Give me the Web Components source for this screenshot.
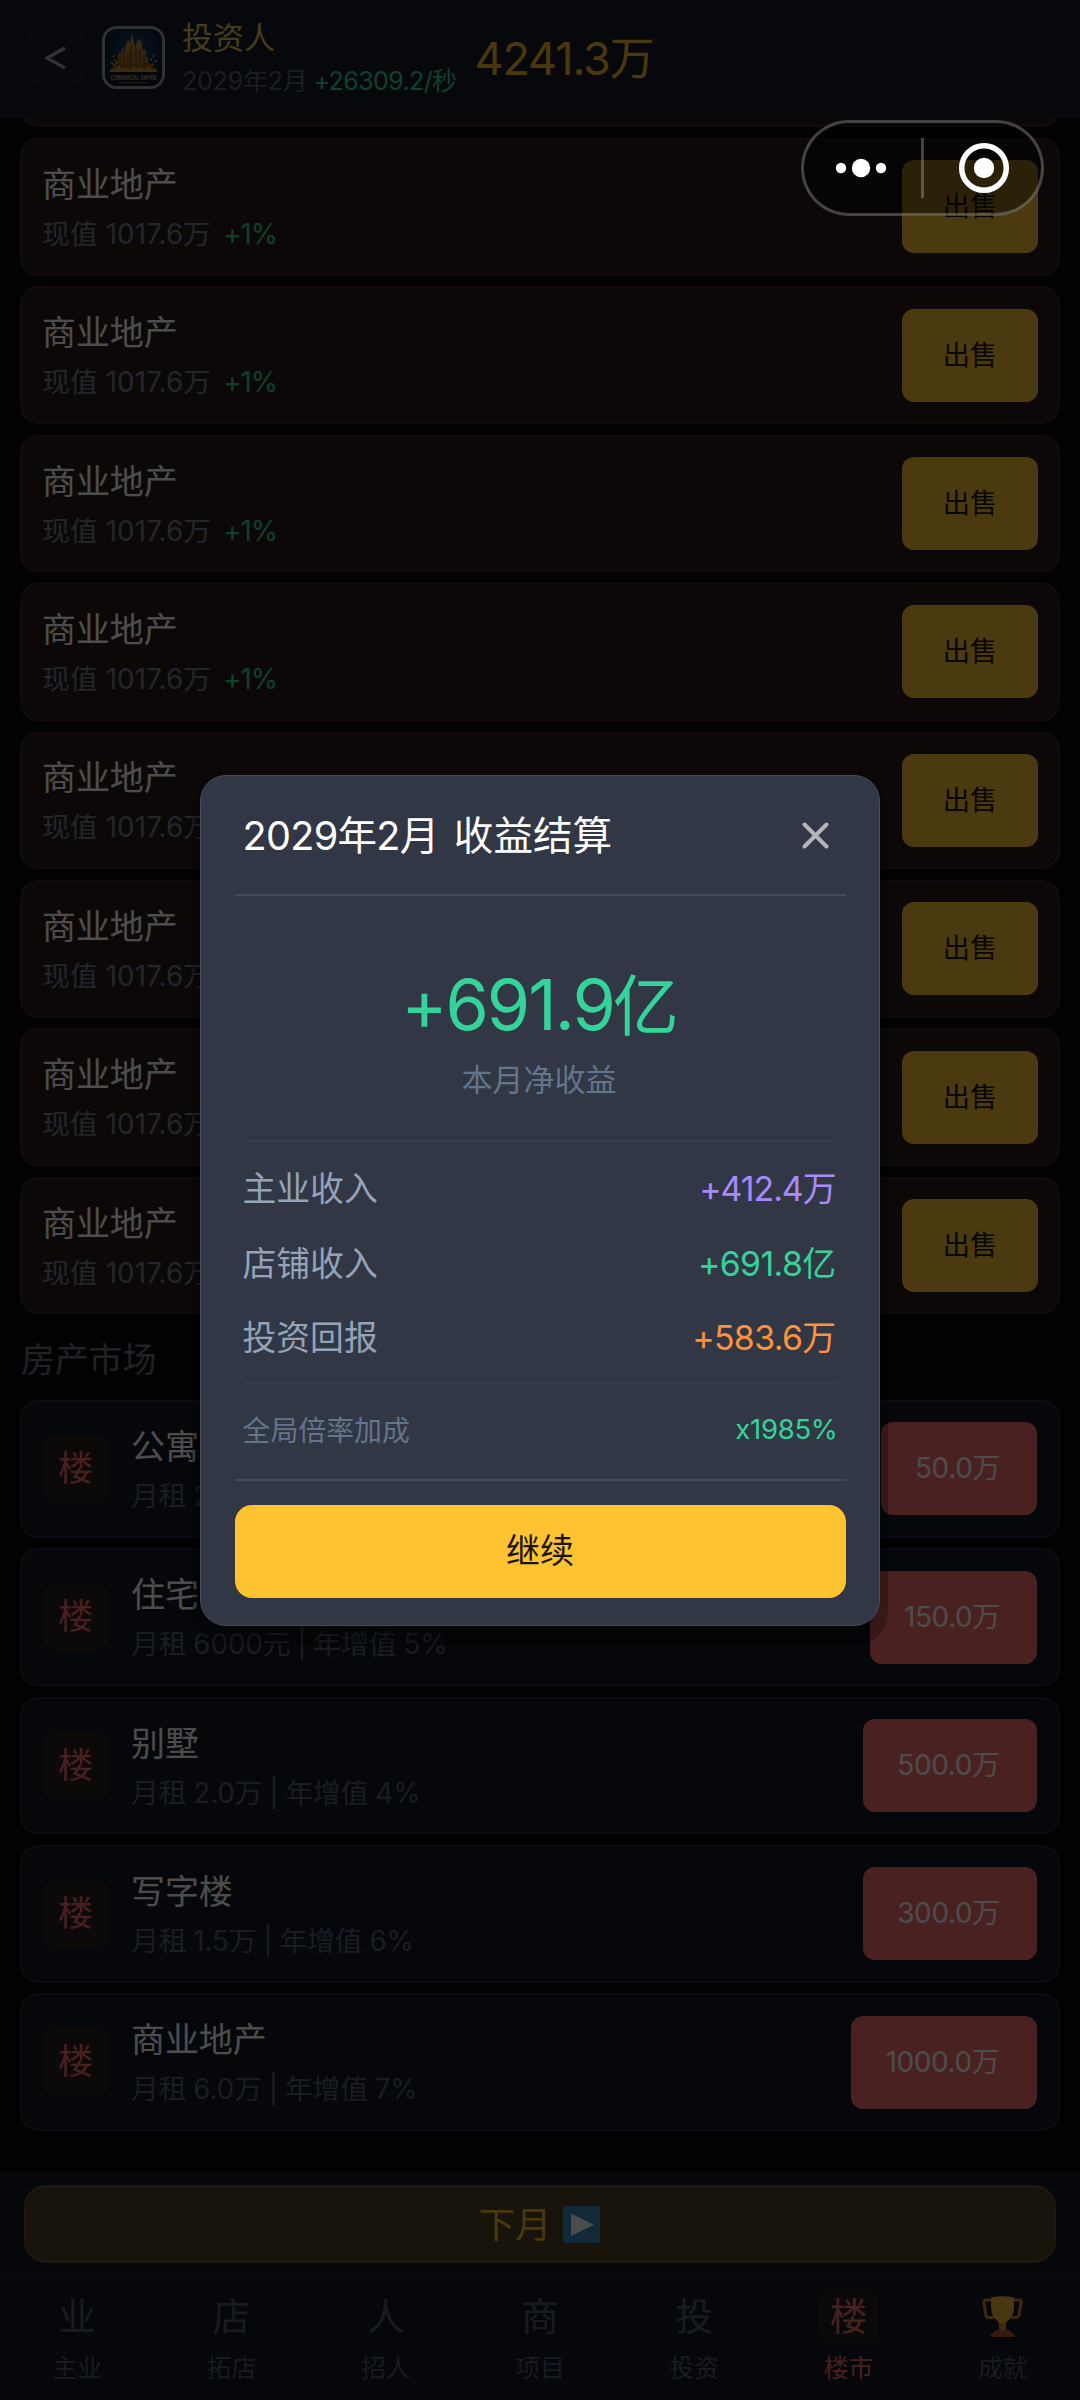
<!DOCTYPE html>
<html lang="zh-CN">
<head>
<meta charset="utf-8">
<title>投资人</title>
<style>
html,body{margin:0;padding:0;background:#08080c}
body{width:1080px;height:2400px;overflow:hidden;font-family:Inter,"Noto Sans CJK SC",sans-serif;color:#fff}
</style>
</head>
<body>
<game-app></game-app>
<script>
const define = (name, css, html) => customElements.define(name, class extends HTMLElement {
  constructor() {
    super();
    this.attachShadow({ mode: 'open' });
  }
  connectedCallback() {
    const body = typeof html === 'function' ? html(this) : html;
    this.shadowRoot.innerHTML = `<style>*{box-sizing:border-box}:host{box-sizing:border-box;white-space:nowrap}${css}</style>${body}`;
  }
});

define('app-logo', ':host{display:block;width:63px;height:63px}svg{display:block}', `
<svg width="63" height="63" viewBox="0 0 63 63">
  <defs>
    <radialGradient id="b" cx=".5" cy=".4" r=".7"><stop offset="0" stop-color="#1a4d6e"/><stop offset=".6" stop-color="#0b2740"/><stop offset="1" stop-color="#04101d"/></radialGradient>
    <linearGradient id="g" x1="0" y1="0" x2="0" y2="1"><stop offset="0" stop-color="#d39a42"/><stop offset="1" stop-color="#96601a"/></linearGradient>
  </defs>
  <rect x="1.5" y="1.5" width="60" height="60" rx="13" fill="url(#b)" stroke="#a0a4a8" stroke-width="3"/>
  <path d="M11 44V38l3-1v2l2-5v-5l2-3 1 4v-4l2-5 2 5v-4l2-6 2-2 1 5 1-6 1-7 1 7 2 8 2-5 2-3 3 4v8l2-3 2 4v6l2-1v5l3 2 2 3v3z" fill="url(#g)"/>
  <path d="M18 42V31M22 42V25M26 42V27M29 42V20M34 42V22M38 42V24M42 42V28M15 43V38M46 43V36" stroke="#5e4119" stroke-width="1"/>
  <path d="M7 46l3-4 3 2 4-5 3 5 4-3 4 3 4-4 3 4 4-3 4 3 4-4 3 4 3-2 3 4z" fill="#c98c35"/>
  <path d="M11 31l2-2M9 37l2 1M51 29l1 2M53 36l2-2M48 33l2 1M14 35l1 2M12 34l1 1M50 38l2 1" stroke="#d79c42" stroke-width="1.6"/>
  <path d="M7 46h49v9H7z" fill="#0b1824"/>
  <text transform="translate(31.5 53.600) scale(1 1.900)" text-anchor="middle" font-family="Liberation Sans" font-weight="700" font-size="4.200" fill="#c39a58">COMMERCIAL EMPIRE</text>
  <path d="M17 56.5h29" stroke="#735a3a" stroke-width="1"/>
</svg>`);

define('top-bar', `
:host{display:flex;align-items:center;height:117px;flex:none;background:#141b26;border-bottom:2px solid #1c2430;padding-left:26px}
.back{width:59px;height:59px;border-radius:14px;background:#191f2a;display:grid;place-items:center;margin-right:17px}
.who{margin-left:17px;width:292.5px}
.name{font-size:31px;line-height:42px;color:#efc25a;margin-top:5px}
.meta{display:flex;font-size:25px;line-height:44px;color:#566479}
.date{width:131.500px;letter-spacing:-.2px}
.rate{color:#34d399;letter-spacing:-.6px}
.cash{font-size:45px;color:#f9ba28;letter-spacing:-1.100px;margin-top:-4px}`, `
<div class="back"><svg width="22" height="24" viewBox="0 0 22 24"><path d="M20 2L2 12l18 10" fill="none" stroke="#a2a7b0" stroke-width="3.300"/></svg></div>
<app-logo></app-logo>
<div class="who"><div class="name">投资人</div><div class="meta"><span class="date">2029年2月</span><span class="rate">+26309.2/秒</span></div></div>
<div class="cash">4241.3万</div>`);

define('asset-card', `
:host{display:flex;align-items:center;height:137.6px;flex:none;border:2px solid #222b38;border-radius:18px;background:#131923;padding:0 20.500px 0 20px}
:host([owned]){background:#291b1c;border-color:#3a2528;padding-right:19.500px}
.badge{width:68px;height:68px;border-radius:16px;background:#28201f;color:#f06b6b;font-size:35px;line-height:66px;text-align:center;margin-right:21px;padding-right:1px}
.text{flex:1}
.title{font-size:34px;line-height:50px;letter-spacing:-.1px}
.sub{font-size:27.8px;line-height:40px;margin-top:4px;color:#536379;word-spacing:-.9px;letter-spacing:-.08px}
:host([owned]) .sub{color:#747f90;word-spacing:0;letter-spacing:.1px}
.up{color:#34d399;margin-left:12px;letter-spacing:-1px}
.btn{height:93px;border-radius:12px;line-height:93px;text-align:center;background:#f76e70;color:#fff;font-size:28px;letter-spacing:-.4px;padding-right:3px}
:host([owned]) .btn{width:136px;background:#fcc038;color:#1c1404;font-size:27.300px;letter-spacing:0;padding:0}`, el => {
  const a = n => el.getAttribute(n);
  if (!a('name')) return '';
  const owned = el.hasAttribute('owned');
  return `${owned ? '' : '<div class="badge">楼</div>'}
  <div class="text"><div class="title">${a('name')}</div><div class="sub">${a('sub')}${owned ? `<span class="up">${a('up')}</span>` : ''}</div></div>
  <div class="btn" ${owned ? '' : `style="width:${a('w')}px"`}><slot></slot></div>`;
});

const ownedCards = '<asset-card owned name="商业地产" sub="现值 1017.6万" up="+1%">出售</asset-card>'.repeat(8);
define('asset-list', `
:host{display:block;flex:1;min-height:0;overflow:hidden;background:#08080c}
.col{display:flex;flex-direction:column;gap:10.8px;padding:0 20.5px 0 20px;margin-top:-127.4px}
h2{margin:0;height:64px;padding:5px 0 0 1px;font-weight:400;font-size:34px;line-height:59px;letter-spacing:-.2px;color:#6a7588}`, `
<div class="col"><asset-card owned></asset-card>${ownedCards}
<h2>房产市场</h2>
<asset-card name="公寓" sub="月租 2" w="156">50.0万</asset-card>
<asset-card name="住宅" sub="月租 6000元 | 年增值 5%" w="167">150.0万</asset-card>
<asset-card name="别墅" sub="月租 2.0万 | 年增值 4%" w="174">500.0万</asset-card>
<asset-card name="写字楼" sub="月租 1.5万 | 年增值 6%" w="174">300.0万</asset-card>
<asset-card name="商业地产" sub="月租 6.0万 | 年增值 7%" w="186">1000.0万</asset-card></div>`);

define('next-month', `
:host{display:block;flex:none;height:102px;padding:10px 24px 0;background:#131923;border-top:2px solid #1c222c}
.b{height:78px;border:2px solid #675433;border-radius:22px;background:#51432b;color:#f5b82f;font-size:36.500px;display:flex;align-items:center;justify-content:center;gap:11px;padding-right:2px}
.b span{margin-top:-3px}
svg{display:block}`, `
<div class="b"><span>下月</span><svg width="37" height="37" viewBox="0 0 37 37"><rect width="37" height="37" rx="3" fill="#3b8ec4"/><path d="M8 7.5v22.5l23-11.2z" fill="#fff"/></svg></div>`);

define('nav-item', `
:host{flex:1;display:flex;flex-direction:column;align-items:center;color:#4f5d72}
:host([active]){color:#ef6b6b}
.i{width:59px;height:59px;border-radius:14px;display:grid;place-items:center;font-size:37.5px;line-height:59px}
:host([active]) .i{background:#201e23}
.l{font-size:24.800px;line-height:30px;margin-top:7px}`, '<div class="i"><slot name="icon"></slot></div><div class="l"><slot></slot></div>');

define('tab-bar', `
:host{display:flex;flex:none;height:125px;background:#131923;border-top:2px solid #1c222c;padding-top:10px}svg{display:block}`,
  [['业','主业'],['店','拓店'],['人','招人'],['商','项目'],['投','投资'],['楼','楼市']].map(([i,l]) =>
  `<nav-item ${i === '楼' ? 'active' : ''}><span slot="icon">${i}</span>${l}</nav-item>`).join('') + `
<nav-item><svg slot="icon" width="41" height="41" viewBox="0 0 41 41">
 <path d="M9 4H3.500Q1.700 4 1.900 7l2 12Q4.500 21.500 7 21.500h5M32 4h5.500q1.800 0 1.600 3l-2 12q-.6 2.500-3.100 2.500h-5" fill="none" stroke="#d58a22" stroke-width="3"/>
 <path d="M9 1.500Q20.500-.8 32 1.500v10q-.4 9.500-7.500 14.500-1.500 2 0 9H16.500q1.500-7 0-9Q9.400 21 9 11.500z" fill="#f5b838"/>
 <path d="M18 27h5l1.500 8h-8z" fill="#d98d20"/>
 <path d="M8.500 41v-2q.3-2.500 3-2.500 1-2.500 4-2.500h10q3 0 4 2.500 2.700 0 3 2.500v2z" fill="#b85636"/></svg>成就</nav-item>`);

define('income-row', `
:host{display:flex;justify-content:space-between;align-items:center;height:74.4px;font-size:33.800px;color:#94a3b8;padding-right:2px}
.v{color:var(--tone,#34d399);letter-spacing:var(--track,0)}
:host([small]){font-size:27.900px;color:#64748b;height:89px;padding-right:0}
:host([small]) .v{font-size:27.500px}`, '<slot></slot><span class="v"><slot name="value"></slot></span>');

define('settlement-dialog', `
:host{display:flex;flex-direction:column;width:680px;height:851px;padding:0 33.500px;background:#323745;border:1.500px solid #484c59;border-radius:26px;box-shadow:0 12px 0 8px rgba(0,0,0,.25)}
header{height:120px;flex:none;display:flex;align-items:center;justify-content:space-between;padding:1px 16.500px 0 8px;border-bottom:2px solid #484a59;font-size:39.600px}
header span{margin-top:-6px}
header b{font-weight:400;letter-spacing:-.7px;margin-right:4px}
.total{height:246px;flex:none;padding-top:69px;text-align:center;margin:0 8px;border-bottom:2px solid #353c4b}
.big{font-size:70px;line-height:80px;color:#34d399;letter-spacing:-2px;padding-right:2px}
.big i{font-style:normal;font-size:66px;margin-left:-1px}
.cap{font-size:31px;line-height:40px;margin-top:14px;padding-right:2px;color:#64748b}
.rows{height:242.500px;flex:none;margin:0 8px;padding-top:8px;border-bottom:2px solid #353c4b}
.bonus{height:94.500px;flex:none;padding:0 8px}
.foot{border-top:2px solid #484a59;padding-top:24px}
button{all:unset;display:block;text-align:center;line-height:92px;width:100%;height:93.500px;border-radius:17px;background:#ffc331;color:#1c1404;font-size:34px}
svg{display:block}`, `
<header><span><b>2029年2月</b> 收益结算</span><svg width="27" height="27" viewBox="0 0 27 27"><path d="M2.500 2.500l22 22M24.500 2.500l-22 22" stroke="#b4b5b8" stroke-width="4" stroke-linecap="round"/></svg></header>
<div class="total"><div class="big">+691.9<i>亿</i></div><div class="cap">本月净收益</div></div>
<div class="rows">
<income-row style="--tone:#a78bfa;--track:-1px">主业收入<span slot="value">+412.4万</span></income-row>
<income-row style="--track:-.6px">店铺收入<span slot="value">+691.8亿</span></income-row>
<income-row style="--tone:#fb923c;--track:-.6px">投资回报<span slot="value">+583.6万</span></income-row></div>
<div class="bonus"><income-row small style="--track:-.3px">全局倍率加成<span slot="value">x1985%</span></income-row></div>
<div class="foot"><button>继续</button></div>`);

define('mini-capsule', `
:host{position:absolute;left:801px;top:120px;width:243px;height:96px;border-radius:48px;border:3px solid rgba(255,255,255,.25);background:rgba(0,0,0,.42)}
svg{display:block;margin:-3px}`, `
<svg width="243" height="96" viewBox="0 0 243 96" fill="#fff"><circle cx="40" cy="48" r="5.200"/><circle cx="60" cy="48" r="9.200"/><circle cx="80" cy="48" r="5.200"/><path d="M120 18h3v60h-3z" fill-opacity=".25"/><circle cx="183" cy="48" r="22.300" fill="none" stroke="#fff" stroke-width="5.500"/><circle cx="183" cy="48" r="10.200"/></svg>`);

define('game-app', `
:host{display:flex;flex-direction:column;position:relative;width:1080px;height:2400px}
.scrim{position:absolute;inset:0;background:rgba(0,0,0,.7);display:grid;place-items:center}`, `
<top-bar></top-bar><asset-list></asset-list><next-month></next-month><tab-bar></tab-bar>
<div class="scrim"><settlement-dialog></settlement-dialog></div>
<mini-capsule></mini-capsule>`);
</script>
</body>
</html>
